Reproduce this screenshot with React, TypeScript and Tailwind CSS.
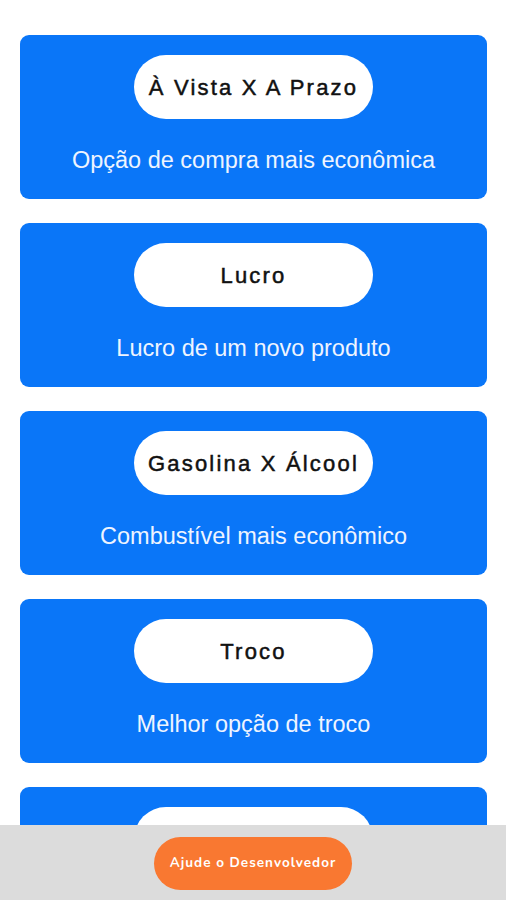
import React from "react";

const items = [
  { title: "À Vista X A Prazo", desc: "Opção de compra mais econômica" },
  { title: "Lucro", desc: "Lucro de um novo produto" },
  { title: "Gasolina X Álcool", desc: "Combustível mais econômico" },
  { title: "Troco", desc: "Melhor opção de troco" },
  { title: "", desc: "" },
];

export default function App() {
  return (
    <div className="relative w-full h-[900px] overflow-hidden bg-white font-['Liberation_Sans',Arial,sans-serif]">
      {/* list of calculators */}
      <div className="flex flex-col gap-[24px] pt-[35px] pl-[20px] pr-[19px]">
        {items.map((item, index) => (
          <div
            key={index}
            className="flex flex-col items-center bg-[#0a76f8] rounded-[9px] pt-[20px] h-[164px] shrink-0"
          >
            <div className="w-[239px] h-[64px] rounded-full bg-white flex items-center justify-center">
              <span className="text-[22px] tracking-[2.2px] text-[#111] [-webkit-text-stroke:0.5px_#111]">
                {item.title}
              </span>
            </div>
            <p className="mt-[28px] text-[23.5px] leading-[26px] text-[#eef4ff]">
              {item.desc}
            </p>
          </div>
        ))}
      </div>

      {/* footer */}
      <div className="absolute left-0 right-0 bottom-0 h-[75px] bg-[#dcdcdc] flex justify-center pt-[12px]">
        <button className="w-[198px] h-[53px] rounded-full bg-[#f97831] text-white text-[13.5px] font-bold tracking-[1px] font-['Nunito','Noto_Sans',sans-serif]">
          Ajude o Desenvolvedor
        </button>
      </div>
    </div>
  );
}
